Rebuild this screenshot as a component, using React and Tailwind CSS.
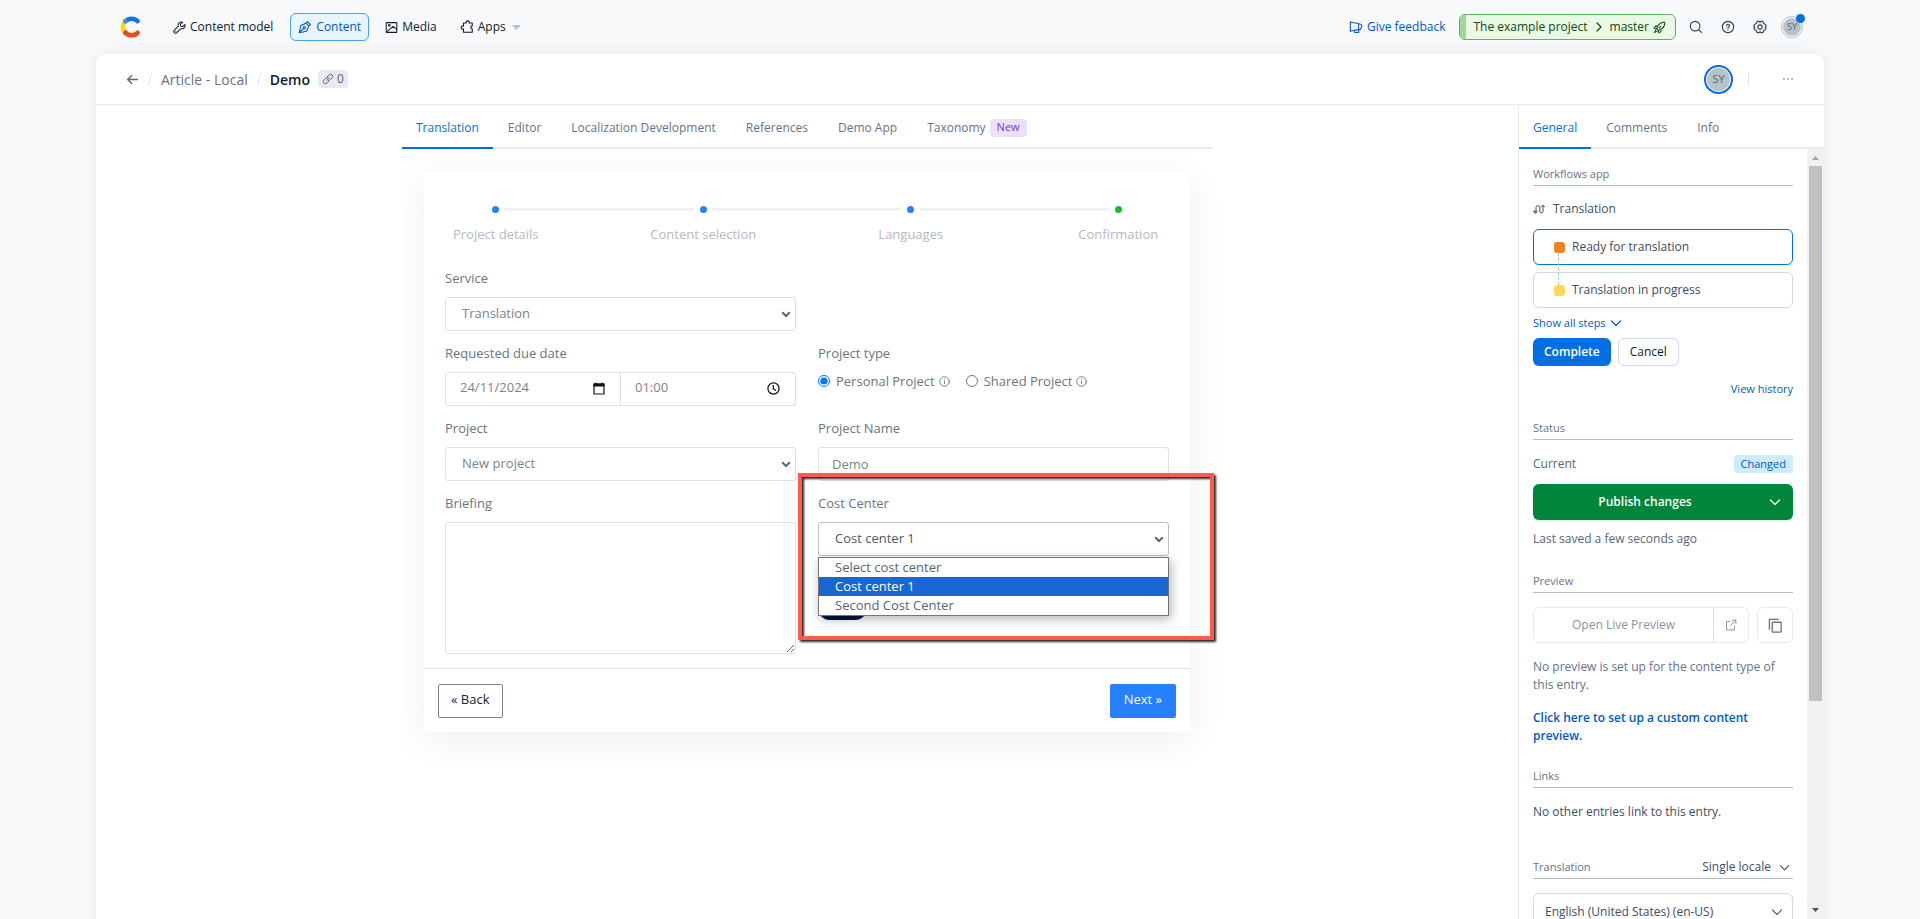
import React, { useState } from "react";

function Icon({ size = 14, sw = 1.25, box = 16, className = "", children }) {
  return (
    <svg
      width={size}
      height={size}
      viewBox={`0 0 ${box} ${box}`}
      fill="none"
      stroke="currentColor"
      strokeWidth={sw}
      strokeLinecap="round"
      strokeLinejoin="round"
      aria-hidden="true"
      className={`shrink-0 ${className}`}
    >
      {children}
    </svg>
  );
}

const Chevron = ({ size = 12, className = "" }) => (
  <Icon size={size} box={12} sw={1.2} className={className}>
    <path d="M1.5 4 6 8.5 10.5 4" />
  </Icon>
);

const InfoIcon = () => (
  <Icon size={11} box={12} sw={1}>
    <circle cx="6" cy="6" r="5.2" />
    <path d="M6 5.6v2.9M6 3.4v.3" />
  </Icon>
);

function Logo() {
  return (
    <svg width="22" height="24" viewBox="0 0 22 24" fill="none" strokeWidth="4.6" strokeLinecap="round" role="img" aria-label="Home">
      <path d="M5.2 6.4a8 8 0 0 0 0 11.2" stroke="#ffd900" />
      <path d="M5.6 6.2a8.4 8.4 0 0 1 12 0" stroke="#1773eb" />
      <path d="M5.6 17.8a8.4 8.4 0 0 0 12 0" stroke="#e4501f" />
      <circle cx="5.4" cy="6.3" r="2.2" fill="#4a90e8" />
      <circle cx="5.4" cy="17.7" r="2.2" fill="#d9482a" />
    </svg>
  );
}

function TopBar() {
  return (
    <header className="flex h-[54px] shrink-0 items-center pl-6 pr-[21px] text-[12px] font-medium text-[#111b2b]">
      <a href="#home" className="flex w-[46px]">
        <Logo />
      </a>
      <nav className="flex items-center gap-2">
        <a href="#model" className="flex h-7 items-center gap-1 pl-[7px] pr-[9px]">
          <Icon size={13}>
            <path d="M14.6 4.2 12 6.8 9.6 6.4 9.2 4l2.6-2.6a4 4 0 0 0-5.2 5L1.4 11.6a1.9 1.9 0 0 0 0 2.4l.6.6a1.9 1.9 0 0 0 2.4 0l5.2-5.2a4 4 0 0 0 5-5.2Z" />
            <path d="M3.4 12.6h.1" />
          </Icon>
          Content model
        </a>
        <a href="#content" className="flex h-7 items-center gap-1 rounded-md border border-[#40a0ff] bg-[#e8f5ff] px-[7px] text-[#0059c8]">
          <Icon size={14}>
            <path d="m1.5 14.5 1.6-8.2L9 3.6 12.4 7l-2.7 5.9-8.2 1.6Zm0 0 4.7-4.7M9 3.6l1.8-1.8 3.4 3.4L12.4 7" />
            <circle cx="7.2" cy="8.8" r="1.3" />
          </Icon>
          Content
        </a>
        <a href="#media" className="flex h-7 items-center gap-1 px-2">
          <Icon size={13}>
            <rect x="1.5" y="2" width="13" height="12" rx=".5" />
            <path d="m2 13.5 8-7 4.500 3.800" />
            <circle cx="5.300" cy="5.300" r="1" />
          </Icon>
          Media
        </a>
        <a href="#apps" className="flex h-7 items-center gap-1 px-[7px]">
          <Icon size={14}>
            <path d="M4 3.500h3a1.900 1.900 0 1 1 3.600 0h3.400v3.200a1.600 1.600 0 1 0 0 3.400v3.900H4v-3.600a1.900 1.900 0 1 1 0-3.500V3.500Z" />
          </Icon>
          Apps
          <svg width="9" height="5" viewBox="0 0 9 5" className="ml-0.5" aria-hidden="true">
            <path d="M0 0h9L4.500 5Z" fill="#b4c3d0" />
          </svg>
        </a>
      </nav>
      <div className="ml-auto flex items-center">
        <a href="#feedback" className="mr-3.5 flex items-center gap-1 text-[#0059c8]">
          <Icon size={14}>
            <path d="M1.500 2v11M1.500 2.500l9.500 1.500v7l-9.500 1.500M11 4.500h1.500a2.500 2.500 0 0 1 1.800 3.800L12.800 11H11M6.500 12v2.200h4.500V11" />
          </Icon>
          Give feedback
        </a>
        <button type="button" className="flex h-[26px] items-center gap-1.5 overflow-hidden rounded-md border border-[#5cb556] bg-[#eaf8e6] pr-[9px] text-[#0c4a12]">
          <span className="mr-px h-full w-1.5 bg-[#9fd896]" />
          The example project
          <Icon size={10} box={10} sw={1.2}>
            <path d="m3 1 4 4-4 4" />
          </Icon>
          <span className="flex items-center gap-1">
            master
            <Icon size={13}>
              <path d="M14.500 1.500c-4-.3-6.800 1.500-8.800 5L4.500 9.300l2.200 2.200 2.800-1.200c3.500-2 5.300-4.800 5-8.800ZM6 6.300l-3-.1-1.700 2.600 3.200.5M9.700 10l.1 3-2.600 1.700-.5-3.200M3.500 10.700l-1.800 3.600 3.600-1.800" />
              <path d="m9.500 6.500-2 2" />
            </Icon>
          </span>
        </button>
        <div className="ml-[13px] flex items-center gap-[18px] text-[#333f52]">
          <button type="button" aria-label="Search">
            <Icon size={14} sw={1.300}>
              <circle cx="7" cy="7" r="5.500" />
              <path d="m11 11 3.500 3.500" />
            </Icon>
          </button>
          <button type="button" aria-label="Help">
            <Icon size={14} sw={1.300}>
              <circle cx="8" cy="8" r="6.500" />
              <path d="M6.300 6.500a1.700 1.700 0 1 1 2.500 1.600L8 8.600v.4M8 11v.1" />
            </Icon>
          </button>
          <button type="button" aria-label="Settings">
            <Icon size={14} sw={1.300}>
              <path d="M5.500 1.500h1.300L8 2.600l1.200-1.100h1.300l1.500 1 .3 1.800 1.700.6.900 1.600v.8L13.800 8l1.100.7v.8l-.9 1.600-1.700.6-.3 1.800-1.500 1H9.200L8 13.400l-1.200 1.100H5.500l-1.500-1-.3-1.800-1.700-.6-.9-1.600v-.8L2.200 8l-1.100-.7v-.8L2 4.900l1.700-.6.3-1.800 1.500-1Z" />
              <circle cx="8" cy="8" r="2.500" />
            </Icon>
          </button>
        </div>
        <button type="button" aria-label="Account" className="relative ml-[14px] flex size-[22px] items-center justify-center rounded-full border border-[#aebfca] bg-white p-px">
          <span className="flex size-full items-center justify-center rounded-full bg-[#b7c2c9] text-[9px] text-[#5a6675]">SY</span>
          <span className="absolute -right-[3px] -top-[3px] size-[9px] rounded-full bg-[#036fe3]" />
        </button>
      </div>
    </header>
  );
}

function EntryHeader() {
  return (
    <div className="flex h-[51px] shrink-0 items-center border-b border-[#e7ebee] pl-[30px] pr-[30px]">
      <button type="button" aria-label="Back" className="text-[#5a657c]">
        <Icon size={13} sw={1.600}>
          <path d="M14 8H2.500M7 3 2 8l5 5" />
        </Icon>
      </button>
      <Slash />
      <a href="#article" className="text-[14px] text-[#67728a]">Article - Local</a>
      <Slash />
      <h1 className="text-[14px] font-semibold text-[#111b2b]">Demo</h1>
      <span className="ml-2 flex h-[18px] items-center gap-[3px] rounded bg-[#e7ebee] px-1 text-[12px] text-[#5a657c]">
        <Icon size={12} sw={1.300}>
          <path d="m6.500 9.500 3-3M7 5l2.500-2.500a2.800 2.800 0 0 1 4 4L11 9a2.800 2.800 0 0 1-3.500.4M9 11l-2.500 2.500a2.800 2.800 0 0 1-4-4L5 7a2.800 2.800 0 0 1 3.500-.4" />
        </Icon>
        0
      </span>
      <div className="ml-auto flex items-center">
        <span className="flex size-[29px] items-center justify-center rounded-full border-2 border-[#036fe3] bg-white p-px">
          <span className="flex size-full items-center justify-center rounded-full bg-[#b7c2c9] text-[11px] text-[#5a6675]">SY</span>
        </span>
        <span className="ml-[15px] mr-[33px] h-3.5 w-px bg-[#e0e4e8]" />
        <button type="button" aria-label="More actions" className="text-[#5a657c]">
          <svg width="12" height="4" viewBox="0 0 12 4" fill="currentColor" aria-hidden="true">
            <circle cx="2" cy="2" r=".8" />
            <circle cx="6" cy="2" r=".8" />
            <circle cx="10" cy="2" r=".8" />
          </svg>
        </button>
      </div>
    </div>
  );
}

const Slash = () => (
  <svg width="6" height="14" viewBox="0 0 6 14" className="mx-2 shrink-0" aria-hidden="true">
    <path d="M1 13.500 5 .5" stroke="#dfe3e8" />
  </svg>
);

function Tabs({ items, active }) {
  return (
    <div role="tablist" className="flex h-11 shrink-0 text-[12px] font-medium text-[#67728a] shadow-[inset_0_-2px_0_#e7ebee]">
      {items.map((item) => (
        <button
          key={item}
          type="button"
          role="tab"
          aria-selected={item === active}
          className={
            item === active
              ? "flex items-center border-b-2 border-[#036fe3] px-[14px] pt-[3px] text-[#036fe3]"
              : "flex items-center px-[15px] pt-px"
          }
        >
          {item}
          {item === "Taxonomy" && (
            <span className="ml-1 flex h-[18px] items-center rounded bg-[#ece0fe] px-[7px] text-[11px] text-[#6c3ecf]">New</span>
          )}
        </button>
      ))}
    </div>
  );
}

const STEPS = [
  ["Project details", "bg-[#2680ff]"],
  ["Content selection", "bg-[#2680ff]"],
  ["Languages", "bg-[#2680ff]"],
  ["Confirmation", "bg-[#12c22b]"],
];

function Stepper() {
  return (
    <ol className="-mx-8 grid grid-cols-4">
      {STEPS.map(([label, color], i) => (
        <li key={label} className="flex flex-col items-center gap-[11px] text-[13px] leading-5 text-[#b3bac3]">
          <span className="flex w-full items-center gap-1.5">
            <span className={i === 0 ? "h-[3px] flex-1" : "h-[3px] flex-1 bg-[#edf2f9]"} />
            <span className={`size-[7px] rounded-full ${color}`} />
            <span className={i === 3 ? "h-[3px] flex-1" : "h-[3px] flex-1 bg-[#edf2f9]"} />
          </span>
          {label}
        </li>
      ))}
    </ol>
  );
}

const FIELD = "block h-[34px] w-full rounded-[3px] border bg-white text-[13px] outline-none";
const IDLE = "border-[#dce0e5] text-[#7b838c]";
const FOCUSED = "border-[#b9c0c9] text-[#4f5861]";

function Field({ id, label, children }) {
  return (
    <div className="pb-3">
      <label htmlFor={id} className="mb-[9px] block text-[13px] leading-5 text-[#6c757d]">{label}</label>
      {children}
    </div>
  );
}

function Select({ id, options, value, tone = IDLE }) {
  return (
    <div className="relative">
      <select id={id} defaultValue={value} className={`${FIELD} appearance-none px-4 ${tone}`}>
        {options.map((o) => (
          <option key={o}>{o}</option>
        ))}
      </select>
      <svg width="10" height="7" viewBox="0 0 10 7" className="pointer-events-none absolute right-[5px] top-[14px]" aria-hidden="true">
        <path d="m1.200 1.200 3.800 3.800 3.800-3.800" fill="none" stroke="#5f6870" strokeWidth="2" />
      </svg>
    </div>
  );
}

function Radio({ label, name, defaultChecked }) {
  return (
    <label className="flex items-center gap-1.5">
      <input type="radio" name={name} defaultChecked={defaultChecked} className="m-0 size-3 accent-[#0075ff]" />
      <span className="flex items-center gap-1">
        {label}
        <InfoIcon />
      </span>
    </label>
  );
}

const COST_CENTERS = ["Select cost center", "Cost center 1", "Second Cost Center"];

function CostCenter() {
  const [enabled, setEnabled] = useState(true);
  return (
    <div className="relative">
      <Field id="cost" label="Cost Center">
        <div className="relative">
          <Select id="cost" options={COST_CENTERS} value="Cost center 1" tone={FOCUSED} />
          <ul role="listbox" aria-label="Cost Center" className="absolute inset-x-0 top-[35px] z-10 border border-[#767676] bg-white text-[13px] leading-[19px] text-[#5b636b] shadow-[2px_3px_10px_rgba(0,0,0,0.3)]">
            {COST_CENTERS.map((c) => (
              <li
                key={c}
                role="option"
                aria-selected={c === "Cost center 1"}
                className={c === "Cost center 1" ? "bg-[#1967d2] px-4 text-white" : "px-4"}
              >
                {c}
              </li>
            ))}
          </ul>
        </div>
      </Field>
      <label className="mt-7 flex">
        <input
          type="checkbox"
          role="switch"
          aria-label="Use cost center"
          checked={enabled}
          onChange={() => setEnabled(!enabled)}
          className="m-0 h-6 w-[49px] appearance-none rounded-full bg-[#001540]"
        />
      </label>
      <div className="pointer-events-none absolute -bottom-[20px] -left-5 -right-[45px] -top-5 z-20 border-4 border-[#ff5a4c] drop-shadow-[2px_2px_1px_rgba(0,0,0,0.85)]" />
    </div>
  );
}

function ProjectForm() {
  return (
    <form className="mx-[22px] mt-[22px] rounded bg-white shadow-[0_8px_36px_rgba(30,60,60,0.08)]" onSubmit={(e) => e.preventDefault()}>
      <div className="pt-[35px]">
        <Stepper />
      </div>
      <div className="grid grid-cols-2 gap-x-[22px] px-[21px] pb-0.5 pt-6 text-[13px] text-[#6c757d]">
        <div>
          <Field id="service" label="Service">
            <Select id="service" options={["Translation"]} value="Translation" />
          </Field>
          <Field id="date" label="Requested due date">
            <div className="flex">
              <div className="relative flex-1">
                <input id="date" type="text" defaultValue="24/11/2024" className={`${FIELD} ${IDLE} rounded-r-none px-[14px] pb-1`} />
                <svg width="12" height="13" viewBox="0 0 12 13" className="pointer-events-none absolute right-4 top-[10px]" aria-hidden="true">
                  <path d="M1 12V2h10v10H1ZM3 .5V2m6-1.500V2" fill="none" stroke="#111" strokeWidth="1.200" />
                  <path d="M.5 1.500h11v3H.5z" fill="#111" />
                </svg>
              </div>
              <div className="relative -ml-px flex-1">
                <input type="text" aria-label="Due time" defaultValue="01:00" className={`${FIELD} ${IDLE} rounded-l-none px-[14px] pb-1`} />
                <svg width="13" height="13" viewBox="0 0 13 13" fill="none" stroke="#111" strokeWidth="1.200" className="pointer-events-none absolute right-4 top-[10px]" aria-hidden="true">
                  <circle cx="6.500" cy="6.500" r="5.600" />
                  <path d="M6.300 3v3.800l2.700 1.700" />
                </svg>
              </div>
            </div>
          </Field>
          <Field id="project" label="Project">
            <Select id="project" options={["New project"]} value="New project" />
          </Field>
          <Field id="briefing" label="Briefing">
            <textarea id="briefing" className="block h-[132px] w-full resize rounded-[3px] border border-[#dce0e5] bg-white outline-none" />
          </Field>
        </div>
        <div className="pt-[75px]">
          <fieldset className="h-[75px]">
            <legend className="mb-2 block leading-5">Project type</legend>
            <div className="flex gap-4 leading-5">
              <Radio name="type" label="Personal Project" defaultChecked />
              <Radio name="type" label="Shared Project" />
            </div>
          </fieldset>
          <Field id="name" label="Project Name">
            <input id="name" type="text" defaultValue="Demo" className={`${FIELD} ${IDLE} px-[13px]`} />
          </Field>
          <CostCenter />
        </div>
      </div>
      <div className="flex items-center justify-between border-t border-[#dce0e5] px-[14px] pb-[14px] pt-[15px] text-[13px]">
        <button type="button" className="h-[34px] rounded-xs border border-[#7b858f] px-3 pb-0.5 text-[#212529]">« Back</button>
        <button type="submit" className="h-[34px] rounded-xs bg-[#2680ff] px-[14px] pb-0.5 text-white">Next »</button>
      </div>
    </form>
  );
}

function Section({ title, extra, className = "", children }) {
  return (
    <section className={className}>
      <div className="flex h-5 items-center justify-between border-b border-[#aebfca] pb-[3px]">
        <h2 className="text-[11px] font-medium text-[#67728a]">{title}</h2>
        {extra}
      </div>
      {children}
    </section>
  );
}

function Step({ color, label, border, first }) {
  return (
    <li className={`relative flex h-9 items-center gap-[7px] rounded-md border bg-white pl-5 text-[12px] text-[#3f4a5c] ${border}`}>
      <span className={`size-[11px] rounded-[3px] ${color}`} />
      {label}
      {first && <span className="absolute left-6 top-[23px] z-10 h-8 border-l border-dashed border-[#aebfca]" />}
    </li>
  );
}

function Sidebar() {
  return (
    <aside className="flex w-[306px] shrink-0 flex-col border-l border-[#e7ebee]">
      <Tabs items={["General", "Comments", "Info"]} active="General" />
      <div className="flex min-h-0 flex-1">
        <div className="min-w-0 flex-1 overflow-hidden px-[14px] pt-[17px] text-[12px] leading-[18px] text-[#5a657c]">
          <Section title="Workflows app">
            <h3 className="mt-[14px] flex items-center gap-2 font-medium text-[#414d63]">
              <Icon size={12} sw={1.300}>
                <path d="M4 12.500V6a2.500 2.500 0 0 1 5 0v5a2.200 2.200 0 0 0 4.400 0V3M1 11h4.500L3.200 14 1 11ZM11 5.500 13.400 3l2.300 2.500" />
              </Icon>
              Translation
            </h3>
            <ol className="mt-[11px] flex flex-col gap-[7px]">
              <Step first color="bg-[#f08223]" border="border-[#036fe3]" label="Ready for translation" />
              <Step color="bg-[#ffd860]" border="border-[#cfd9e0]" label="Translation in progress" />
            </ol>
            <button type="button" className="mt-[6px] flex items-center gap-1 text-[11px] leading-[18px] text-[#0059c8]">
              Show all steps <Chevron />
            </button>
            <div className="mt-[6px] flex gap-[7px]">
              <button type="button" className="h-7 rounded-md bg-[#036fe3] px-[11px] font-semibold text-white">Complete</button>
              <button type="button" className="h-7 rounded-md border border-[#cfd9e0] px-[11px] font-medium text-[#111b2b]">Cancel</button>
            </div>
            <a href="#history" className="mt-[14px] block text-right text-[11px] font-medium text-[#0059c8]">View history</a>
          </Section>
          <Section title="Status" className="mt-[22px]">
            <div className="mt-[15px] flex items-center justify-between">
              Current
              <span className="rounded bg-[#ceecff] px-[7px] text-[11px] font-medium text-[#0059c8]">Changed</span>
            </div>
            <div className="mt-[11px] flex h-9 rounded-md bg-[#00853c] text-white shadow-sm">
              <button type="button" className="flex-1 font-semibold">Publish changes</button>
              <button type="button" aria-label="More publish options" className="flex w-9 items-center justify-center">
                <Chevron />
              </button>
            </div>
            <p className="mt-[10px]">Last saved a few seconds ago</p>
          </Section>
          <Section title="Preview" className="mt-[25px]">
            <div className="mt-[14px] flex gap-2 text-[#8a93a2]">
              <div className="flex h-9 flex-1 rounded-md border border-[#e7ebee]">
                <button type="button" className="flex-1 font-medium">Open Live Preview</button>
                <button type="button" aria-label="Open in new tab" className="flex w-[35px] items-center justify-center border-l border-[#dce1e6]">
                  <Icon size={12} sw={1.300}>
                    <path d="M9.500 1.500h5v5M14.500 1.500 7.500 8.500M6.500 3.500H2v11h10.500V9.500" />
                  </Icon>
                </button>
              </div>
              <button type="button" aria-label="Copy preview link" className="flex size-9 items-center justify-center rounded-md border border-[#e7ebee] text-[#67728a]">
                <Icon size={15} sw={1.400}>
                  <path d="M1.500 12V1.500h9.500" />
                  <rect x="4.500" y="4.500" width="9.500" height="10.500" rx=".5" />
                </Icon>
              </button>
            </div>
            <p className="mt-[15px] text-[#67728a]">No preview is set up for the content type of this entry.</p>
            <a href="#preview" className="mt-[15px] block font-semibold text-[#0059c8]">Click here to set up a custom content preview.</a>
          </Section>
          <Section title="Links" className="mt-[23px]">
            <p className="mt-[15px] text-[#414d63]">No other entries link to this entry.</p>
          </Section>
          <Section
            title="Translation"
            className="mt-[38px]"
            extra={
              <button type="button" className="flex items-center gap-2 pr-[3px] text-[12px] text-[#414d63]">
                Single locale <Chevron size={11} />
              </button>
            }
          >
            <div className="relative mt-[14px]">
              <select aria-label="Locale" className="block h-9 w-full appearance-none rounded-md border border-[#cfd9e0] bg-white px-[11px] pt-0.5 text-[12px] text-[#414d63]">
                <option>English (United States) (en-US)</option>
              </select>
              <Chevron className="pointer-events-none absolute right-[10px] top-[13px]" />
            </div>
          </Section>
        </div>
        <div className="flex w-[17px] shrink-0 flex-col items-center bg-[#f1f1f1]" aria-hidden="true">
          <svg width="7" height="17" viewBox="0 0 7 17" className="shrink-0">
            <path d="M0 11h7L3.500 7Z" fill="#a3a3a3" />
          </svg>
          <span className="w-[13px] flex-[535] bg-[#c1c1c1]" />
          <span className="flex-[201]" />
          <svg width="7" height="17" viewBox="0 0 7 17" className="shrink-0">
            <path d="M0 6h7L3.500 10Z" fill="#505050" />
          </svg>
        </div>
      </div>
    </aside>
  );
}

export default function App() {
  return (
    <div className="h-screen overflow-hidden bg-[#f7f9fa] px-24 font-['Open_Sans',sans-serif]">
      <div className="flex h-full flex-col">
        <TopBar />
        <div className="flex min-h-0 flex-1 flex-col overflow-hidden rounded-t-[10px] bg-white shadow-[0_0_16px_rgba(17,27,43,0.08)]">
          <EntryHeader />
          <div className="flex min-h-0 flex-1">
            <main className="min-w-0 flex-1">
              <div className="mx-auto flex h-full max-w-[810px] flex-col">
                <Tabs
                  items={["Translation", "Editor", "Localization Development", "References", "Demo App", "Taxonomy"]}
                  active="Translation"
                />
                <div className="-mr-2 flex-1 overflow-hidden pr-2">
                  <ProjectForm />
                </div>
              </div>
            </main>
            <Sidebar />
          </div>
        </div>
      </div>
    </div>
  );
}
